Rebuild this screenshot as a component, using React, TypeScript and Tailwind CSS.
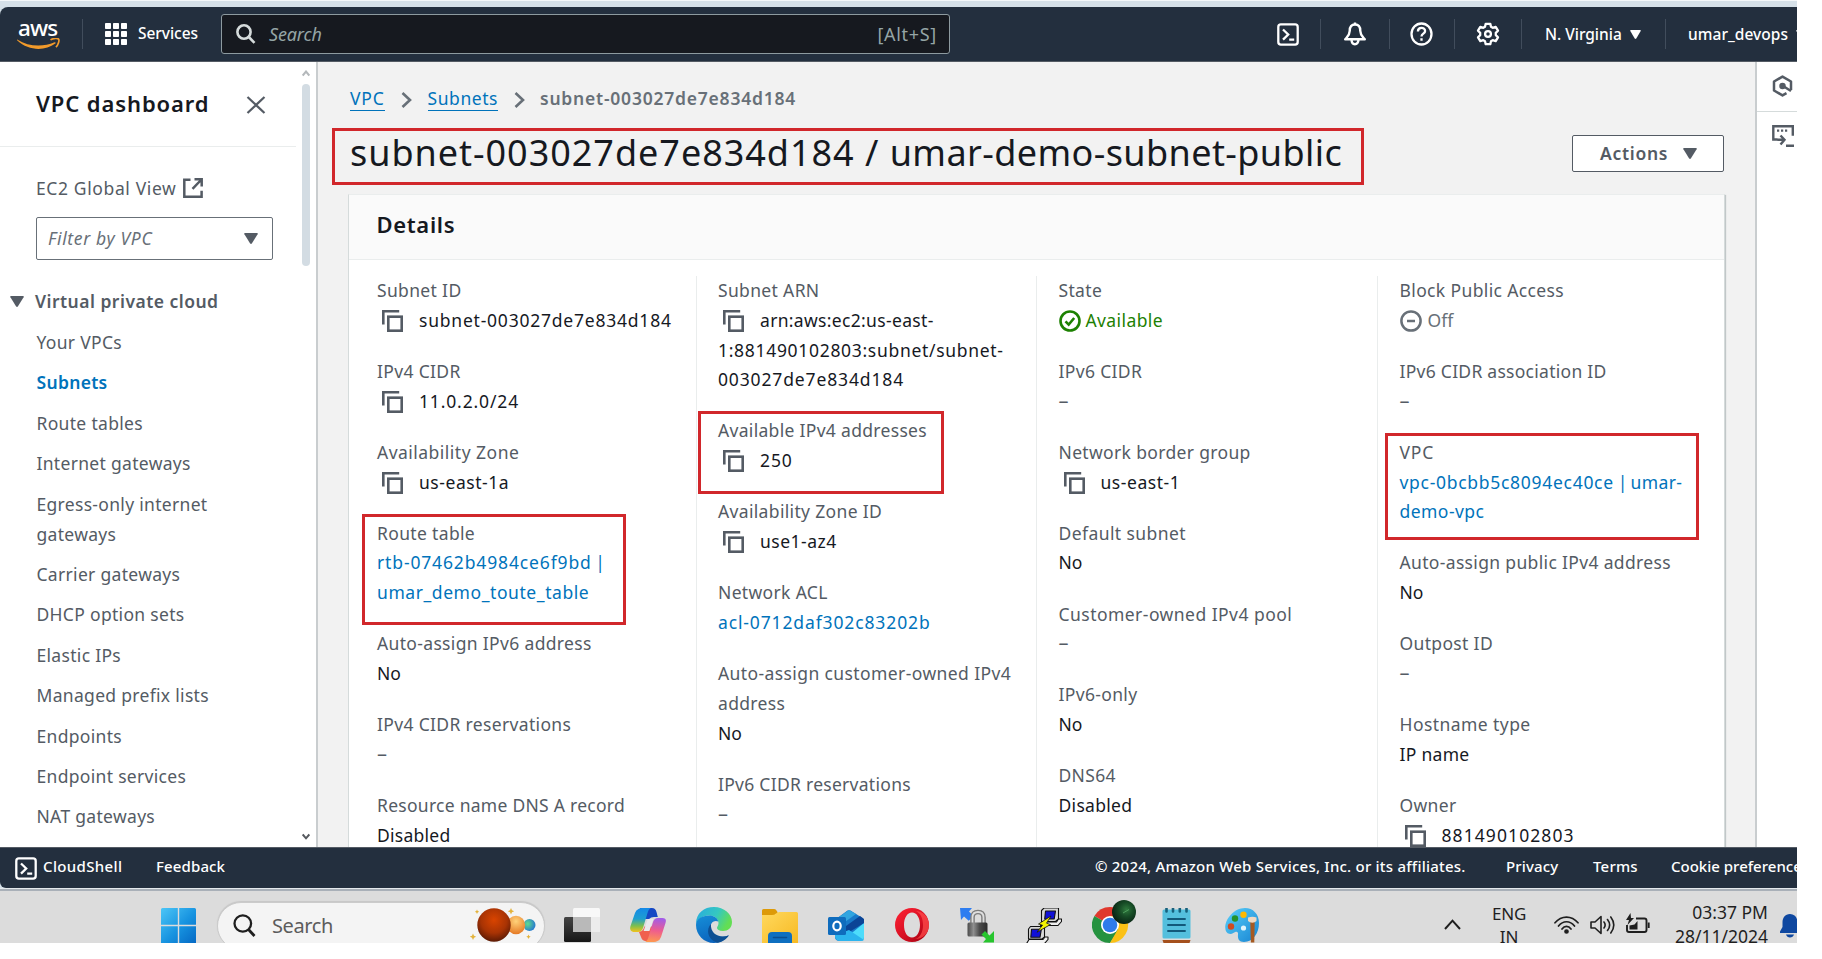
import type { ReactNode } from "react";

function Caret({ className }: { className: string }) {
  return (
    <svg className={className} viewBox="0 0 14 11" preserveAspectRatio="none" fill="currentColor">
      <path d="M1 0h12q1.200 0 .6 1.200L8 10.300Q7 11.500 6 10.300L.4 1.200Q-.2 0 1 0Z" />
    </svg>
  );
}

function ShellIcon() {
  return (
    <svg className="h-[23px] w-[22px] shrink-0 text-white" viewBox="0 0 22 23" preserveAspectRatio="none" fill="none" stroke="currentColor" strokeWidth="2.300">
      <rect x="1.300" y="1.300" width="19.400" height="20.400" rx="2.600" />
      <path d="M6 6.500l5.200 5L6 16.600M12.200 16.600h5" />
    </svg>
  );
}

function CopyIcon() {
  return (
    <svg className="mr-[16px] ml-[5px] inline-block h-[22px] w-[21px] align-[-5px] text-[#545b64]" viewBox="0 0 21 22" fill="none" stroke="currentColor" strokeWidth="2.600">
      <path d="M1.300 14.500V1.300h15.900" />
      <rect x="6.300" y="6.700" width="13.400" height="14" />
    </svg>
  );
}

function Divider() {
  return <div className="h-[30px] w-px shrink-0 bg-[#414d5c]" />;
}

/* ---------- top navigation ---------- */

function TopNav() {
  return (
    <header className="flex h-[55px] shrink-0 items-center overflow-hidden rounded-tl-lg border-b border-[#545b64] bg-[#232f3e] text-white">
      <div className="flex w-[82px] shrink-0 flex-col pl-[17px]">
        <span className="h-[21px] pl-[1px] text-[22.500px] leading-[17px] font-medium tracking-[-0.900px]">aws</span>
        <svg className="-mt-[2px] h-[12px] w-[43px]" viewBox="0 0 43 12" fill="none">
          <path d="M.6 1.700C11 8.600 26 9.400 37.500 4.300c1-.4 1.700.7.8 1.300C28 13.300 11.500 13 .3 2.600-.2 2 .1 1.400.6 1.700Z" fill="#f19a2b" />
          <path d="M33.500 1.900c2.800-1.900 7.600-1.700 8.200-.7.7 1.100-.3 5.800-2.800 8" stroke="#f19a2b" strokeWidth="1.700" />
        </svg>
      </div>
      <Divider />
      <svg className="ml-[22px] h-[22px] w-[22px] shrink-0" viewBox="0 0 22 22" fill="#fff">
        {[0, 8, 16].map((y) => [0, 8, 16].map((x) => <rect key={`${x}-${y}`} x={x} y={y} width="6" height="6" rx=".8" />))}
      </svg>
      <span className="ml-[11px] w-[83px] shrink-0 text-[15.500px] font-medium tracking-[-0.050px]">Services</span>
      <div className="flex h-[40px] w-[729px] shrink-0 items-center rounded-[3px] border border-[#8d9a9f] bg-[#16191f]">
        <svg className="ml-[14px] h-[20px] w-[20px]" viewBox="0 0 20 20" fill="none" stroke="#d5dbdb" strokeWidth="2.600">
          <ellipse cx="8" cy="8" rx="6.600" ry="6.700" />
          <path d="M12.800 13l5.700 5.800" />
        </svg>
        <span className="ml-[13px] grow text-[18px] tracking-[-0.150px] text-[#95a5a6] italic">Search</span>
        <span className="mr-[12px] text-[18px] tracking-[0.700px] text-[#95a5a6]">[Alt+S]</span>
      </div>
      <div className="ml-[327px]">
        <ShellIcon />
      </div>
      <div className="ml-[21px] flex items-center">
        <Divider />
        <svg className="mx-[22px] h-[24px] w-[24px]" viewBox="0 0 24 24" fill="none" stroke="#fff" strokeWidth="2.400" strokeLinejoin="round">
          <path d="M12 2.500c-4 0-5.300 3-5.300 6.500 0 4-2 5.300-4.500 8.300h19.600c-2.500-3-4.500-4.300-4.500-8.300 0-3.500-1.300-6.500-5.300-6.500Z" />
          <path d="M12 .5v2.500M8.600 18c0 5.600 6.800 5.600 6.800 0" />
        </svg>
        <Divider />
        <svg className="mr-[21px] ml-[20px] h-[24px] w-[23px]" viewBox="0 0 23 24" fill="none" stroke="#fff" strokeWidth="2.300">
          <ellipse cx="11.500" cy="12" rx="10" ry="10.500" />
          <path d="M7.900 9.500c0-4.800 7.200-4.800 7.200-.5 0 2.800-3.600 2.600-3.600 5.500M11.500 16.200v2.500" />
        </svg>
        <Divider />
        <svg className="mr-[21px] ml-[21px] h-[24px] w-[24px]" viewBox="0 0 24 24" fill="none" stroke="#fff" strokeWidth="2.300" strokeLinejoin="round">
          <path d="M9.700 1.800h4.600l.7 3 1.700 1 3-.9 2.300 3.800-2.200 2.200v2.200l2.200 2.200-2.300 3.800-3-.9-1.700 1-.7 3H9.700l-.7-3-1.700-1-3 .9L2 15.300l2.200-2.200v-2.200L2 8.700l2.300-3.800 3 .9 1.700-1Z" />
          <circle cx="12" cy="12" r="2.900" />
        </svg>
        <Divider />
      </div>
      <span className="mt-[2px] ml-[23px] w-[85px] shrink-0 text-[15.500px] font-medium tracking-[-0.020px]">N. Virginia</span>
      <Caret className="h-[9px] w-[11px] shrink-0" />
      <div className="ml-[24px]">
        <Divider />
      </div>
      <span className="mt-[2px] ml-[22px] w-[108px] shrink-0 text-[15.500px] font-medium tracking-[0.050px]">umar_devops</span>
      <Caret className="h-[9px] w-[11px] shrink-0" />
    </header>
  );
}

/* ---------- sidebar ---------- */

const navItems: ReactNode[] = [
  "Your VPCs",
  "Subnets",
  "Route tables",
  "Internet gateways",
  <>Egress-only internet<br />gateways</>,
  "Carrier gateways",
  "DHCP option sets",
  "Elastic IPs",
  "Managed prefix lists",
  "Endpoints",
  "Endpoint services",
  "NAT gateways",
];

function Sidebar() {
  return (
    <aside className="flex w-[318px] shrink-0 border-r-2 border-[#c9cdcf] bg-white text-[#545b64]">
      <div className="flex w-[296px] shrink-0 flex-col">
        <div className="flex h-[85px] shrink-0 items-center border-b border-[#eaeded] pb-[3px] pl-[36px]">
          <h2 className="w-[210px] text-[22px] leading-8 font-semibold tracking-[0.900px] text-[#16191f]">VPC dashboard</h2>
          <svg className="mt-[4px] h-[18px] w-[20px]" viewBox="0 0 20 18" preserveAspectRatio="none" stroke="#545b64" strokeWidth="2.200">
            <path d="M1.500 1l17 16M18.500 1l-17 16" />
          </svg>
        </div>
        <div className="mt-[26px] flex h-[30px] shrink-0 items-center pl-[36px]">
          <span className="w-[147px] tracking-[0.620px]">EC2 Global View</span>
          <svg className="h-[20px] w-[20px]" viewBox="0 0 20 20" fill="none" stroke="#545b64" strokeWidth="2.500">
            <path d="M7.500 1.800H1.300v16.900h17.300v-6M11.500 1.300h7.200v7.200M18.500 1.500l-9 9.300" />
          </svg>
        </div>
        <div className="mt-[14px] ml-[36px] flex h-[43px] w-[237px] shrink-0 items-center justify-between rounded-[2px] border border-[#687078] pr-[14px] pl-[11px]">
          <span className="tracking-[0.660px] text-[#687078] italic">Filter by VPC</span>
          <Caret className="h-[11px] w-[14px]" />
        </div>
        <div className="mt-[26px] flex h-[30px] shrink-0 items-center pl-[10px]">
          <Caret className="h-[11px] w-[14px]" />
          <span className="ml-[11px] font-semibold tracking-[0.480px]">Virtual private cloud</span>
        </div>
        <nav className="mt-[11px] flex flex-col gap-[10.400px] pl-[36.500px] leading-[30px] tracking-[0.310px]">
          {navItems.map((item, i) => (
            <a key={i} className={i === 1 ? "font-semibold text-[#0073bb]" : ""}>
              {item}
            </a>
          ))}
        </nav>
      </div>
      <div className="flex w-[20px] flex-col items-center pt-[8px] pr-[1px] pb-[7px]">
        <svg className="h-[7px] w-[8px]" viewBox="0 0 8 7" fill="none" stroke="#b4b8bb" strokeWidth="2">
          <path d="M.7 5.500L4 1.500l3.300 4" />
        </svg>
        <div className="mt-[7px] h-[182px] w-[8px] rounded-[4px] bg-[#d3dce3]" />
        <svg className="mt-auto h-[7px] w-[8px]" viewBox="0 0 8 7" fill="none" stroke="#55595e" strokeWidth="2">
          <path d="M.7 1.500L4 5.300l3.300-3.800" />
        </svg>
      </div>
    </aside>
  );
}

/* ---------- details ---------- */

function Field({ label, children, mark }: { label: ReactNode; children: ReactNode; mark?: string }) {
  return (
    <div className="relative">
      <dt className="tracking-[0.340px] text-[#545b64]">{label}</dt>
      <dd className="text-[#16191f]">{children}</dd>
      {mark && <div className={`absolute border-[3px] border-[#d1272b] ${mark}`} />}
    </div>
  );
}

function Copyable({ children }: { children: ReactNode }) {
  return (
    <>
      <CopyIcon />
      {children}
    </>
  );
}

const Dash = () => <span className="text-[20px] leading-[20px] text-[#545b64]">–</span>;

function Details() {
  return (
    <section className="ml-[30px] flex w-[1377px] grow flex-col border border-b-0 border-[#d5dbdb] border-t-[#eaeded] bg-white shadow-[1px_1px_1px_0_rgba(0,28,36,0.2)]">
      <div className="flex h-[65px] shrink-0 items-center border-b border-[#eaeded] bg-[#fafafa] pb-[6px] pl-[27.500px]">
        <h2 className="text-[22px] font-semibold tracking-[0.650px] text-[#16191f]">Details</h2>
      </div>
      <dl className="mt-[16px] grid grow grid-cols-[347px_340px_341px_347px] leading-[29.800px] whitespace-nowrap [&>div]:flex [&>div]:flex-col [&>div]:gap-[21.300px]">
        <div className="pl-[28px]">
          <Field label="Subnet ID">
            <Copyable><span className="tracking-[0.780px]">subnet-003027de7e834d184</span></Copyable>
          </Field>
          <Field label="IPv4 CIDR">
            <Copyable><span className="tracking-[0.850px]">11.0.2.0/24</span></Copyable>
          </Field>
          <Field label={<span className="tracking-[0.480px]">Availability Zone</span>}>
            <Copyable><span className="tracking-[0.550px]">us-east-1a</span></Copyable>
          </Field>
          <Field label="Route table" mark="-top-[5px] -left-[15px] h-[111px] w-[264px]">
            <a className="text-[#0073bb]">
              <span className="tracking-[0.860px]">rtb-07462b4984ce6f9bd</span>
              <span className="tracking-[-1px]"> |</span>
              <br />
              <span className="tracking-[0.570px]">umar_demo_toute_table</span>
            </a>
          </Field>
          <Field label="Auto-assign IPv6 address">No</Field>
          <Field label="IPv4 CIDR reservations"><Dash /></Field>
          <Field label={<span className="tracking-[0.270px]">Resource name DNS A record</span>}><span className="tracking-[0.250px]">Disabled</span></Field>
        </div>
        <div className="border-l border-[#eaeded] pl-[21px]">
          <Field label="Subnet ARN">
            <Copyable><span className="tracking-[0.330px]">arn:aws:ec2:us-east-</span></Copyable>
            <br />
            <span className="tracking-[0.690px]">1:881490102803:subnet/subnet-</span>
            <br />
            <span className="tracking-[0.860px]">003027de7e834d184</span>
          </Field>
          <Field label={<span className="tracking-[0.310px]">Available IPv4 addresses</span>} mark="-top-[5px] -left-[20px] h-[83px] w-[246px]">
            <Copyable><span className="tracking-[0.900px]">250</span></Copyable>
          </Field>
          <Field label="Availability Zone ID">
            <Copyable><span className="tracking-[0.500px]">use1-az4</span></Copyable>
          </Field>
          <Field label="Network ACL">
            <a className="tracking-[0.870px] text-[#0073bb]">acl-0712daf302c83202b</a>
          </Field>
          <Field label={<><span className="tracking-[0.400px]">Auto-assign customer-owned IPv4</span><br />address</>}>No</Field>
          <Field label={<span className="tracking-[0.280px]">IPv6 CIDR reservations</span>}><Dash /></Field>
        </div>
        <div className="border-l border-[#eaeded] pl-[21.500px]">
          <Field label="State">
            <span className="tracking-[0.400px] text-[#1d8102]">
              <svg className="mr-[5px] inline-block h-[22px] w-[22px] align-[-5px]" viewBox="0 0 22 22" fill="none" stroke="currentColor" strokeWidth="2.600">
                <circle cx="11" cy="11" r="9.500" />
                <path d="M6.500 11.300l3.200 3.300 5.500-6.600" />
              </svg>
              Available
            </span>
          </Field>
          <Field label="IPv6 CIDR"><Dash /></Field>
          <Field label="Network border group">
            <Copyable><span className="tracking-[0.550px]">us-east-1</span></Copyable>
          </Field>
          <Field label={<span className="tracking-[0.420px]">Default subnet</span>}>No</Field>
          <Field label={<span className="tracking-[0.460px]">Customer-owned IPv4 pool</span>}><Dash /></Field>
          <Field label="IPv6-only">No</Field>
          <Field label="DNS64"><span className="tracking-[0.300px]">Disabled</span></Field>
        </div>
        <div className="border-l border-[#eaeded] pl-[21.500px]">
          <Field label={<span className="tracking-[0.370px]">Block Public Access</span>}>
            <span className="text-[#687078]">
              <svg className="mr-[6px] inline-block h-[22px] w-[22px] align-[-5px]" viewBox="0 0 22 22" fill="none" stroke="currentColor" strokeWidth="2.500">
                <circle cx="11" cy="11" r="9.600" />
                <path d="M7 11h8" />
              </svg>
              Off
            </span>
          </Field>
          <Field label={<span className="tracking-[0.270px]">IPv6 CIDR association ID</span>}><Dash /></Field>
          <Field label={<span className="tracking-[0.800px]">VPC</span>} mark="-top-[5px] -left-[15px] h-[107px] w-[314px]">
            <a className="text-[#0073bb]">
              <span className="tracking-[0.710px]">vpc-0bcbb5c8094ec40ce</span>
              <span className="tracking-[-0.700px]"> | </span>
              <span className="tracking-[0.400px]">umar-</span>
              <br />
              <span className="tracking-[0.450px]">demo-vpc</span>
            </a>
          </Field>
          <Field label="Auto-assign public IPv4 address">No</Field>
          <Field label="Outpost ID"><Dash /></Field>
          <Field label={<span className="tracking-[0.430px]">Hostname type</span>}><span className="tracking-[0.300px]">IP name</span></Field>
          <Field label="Owner">
            <Copyable><span className="tracking-[1.080px]">881490102803</span></Copyable>
          </Field>
        </div>
      </dl>
    </section>
  );
}

function Chevron() {
  return (
    <svg className="h-[16px] w-[11px]" viewBox="0 0 11 16" fill="none" stroke="#687078" strokeWidth="2.600">
      <path d="M1.500 1l7.500 7-7.500 7" />
    </svg>
  );
}

function Main() {
  return (
    <main className="flex w-[1437px] shrink-0 flex-col overflow-hidden bg-[#f2f2f2]">
      <div className="flex h-[66px] shrink-0 pt-[24px] pl-[32px] leading-[24px]">
        <a className="mr-[16px] h-[25px] border-b border-[#0073bb] tracking-[0.800px] text-[#0073bb]">VPC</a>
        <span className="flex h-[27px] items-center"><Chevron /></span>
        <a className="mr-[16px] ml-[16px] h-[25px] border-b border-[#0073bb] tracking-[0.550px] text-[#0073bb]">Subnets</a>
        <span className="flex h-[27px] items-center"><Chevron /></span>
        <span className="ml-[15px] font-semibold tracking-[0.780px] text-[#687078]">subnet-003027de7e834d184</span>
      </div>
      <div className="flex h-[66px] shrink-0">
        <div className="ml-[14px] flex h-[57px] w-[1032px] border-[3px] border-[#d1272b] pl-[15px]">
          <h1 className="text-[36px] leading-[44px] whitespace-nowrap text-[#16191f]">
            <span className="tracking-[0.970px]">subnet-003027de7e834d184 / </span>
            <span className="tracking-[0.400px]">umar-demo-subnet-public</span>
          </h1>
        </div>
        <button className="mt-[7px] ml-[208px] flex h-[37px] w-[152px] items-center rounded-[2px] border border-[#545b64] bg-white pl-[27px] font-semibold tracking-[0.700px] text-[#545b64]">
          <span className="w-[83px] text-left">Actions</span>
          <Caret className="h-[11px] w-[14px]" />
        </button>
      </div>
      <Details />
    </main>
  );
}

function ToolRail() {
  return (
    <aside className="flex grow flex-col border-l-2 border-[#c9cdcf] bg-white text-[#545b64]">
      <div className="flex h-[50px] items-center border-b border-[#d5dbdb] pb-[2px] pl-[15px]">
        <svg className="h-[22px] w-[21px] shrink-0" viewBox="0 0 21 22" fill="none" stroke="currentColor" strokeWidth="2.500">
          <path d="M19 15V6.500L10.500 1.600 2 6.500v9l8.500 4.900 4-2.300" strokeLinejoin="round" />
          <circle cx="10.500" cy="11" r="2" fill="currentColor" />
          <path d="M11 11l8 5" />
        </svg>
      </div>
      <svg className="mt-[13px] ml-[15px] h-[22px] w-[23px] shrink-0" viewBox="0 0 23 22" fill="none" stroke="currentColor" strokeWidth="2.400">
        <path d="M5.500 14.500H1.300V1.300h19.500v9.500M5.500 14.800h6M8.500 10.500l4 4.300-4 4.700M14 20.800h8" />
        <path d="M5 5.600h12" strokeDasharray="2.200 1.800" />
      </svg>
    </aside>
  );
}

function Footer() {
  return (
    <footer className="flex h-[41px] shrink-0 items-center overflow-hidden rounded-bl-md border-t border-[#545b64] bg-[#232f3e] pl-[15px] text-[15px] font-medium whitespace-nowrap text-white [&>span]:-mt-[3px]">
      <ShellIcon />
      <span className="ml-[6px] w-[113px] shrink-0 tracking-[0.350px]">CloudShell</span>
      <span className="w-[939px] shrink-0 tracking-[0.130px]">Feedback</span>
      <span className="w-[411px] shrink-0 tracking-[0.220px]">© 2024, Amazon Web Services, Inc. or its affiliates.</span>
      <span className="w-[87px] shrink-0 tracking-[0.150px]">Privacy</span>
      <span className="w-[78px] shrink-0 tracking-[0.200px]">Terms</span>
      <span className="shrink-0">Cookie preferences</span>
    </footer>
  );
}

/* ---------- desktop taskbar ---------- */

function Planets() {
  return (
    <svg className="h-[38px] w-[68px]" viewBox="0 0 68 38">
      <defs>
        <radialGradient id="mars" cx=".5" cy=".35" r=".65"><stop offset="0" stopColor="#d94400" /><stop offset=".6" stopColor="#a83304" /><stop offset="1" stopColor="#5c1a04" /></radialGradient>
        <radialGradient id="venus" cx=".5" cy=".3" r=".7"><stop offset="0" stopColor="#ffd27a" /><stop offset="1" stopColor="#e57a25" /></radialGradient>
        <radialGradient id="earth" cx=".35" cy=".4" r=".7"><stop offset="0" stopColor="#5fdc8c" /><stop offset="1" stopColor="#2374d4" /></radialGradient>
      </defs>
      <circle cx="59.500" cy="19" r="6" fill="url(#earth)" />
      <circle cx="46" cy="19" r="9.200" fill="url(#venus)" />
      <circle cx="24" cy="19" r="16.700" fill="url(#mars)" />
      <path d="M41 2l1 2.200 2.200 1L42 6.200 41 8.400l-1-2.200-2.200-1L40 4.200ZM7 3.500l.7 1.500 1.500.7-1.500.7L7 8l-.7-1.600-1.500-.7L6.300 5ZM3 27.500l1 2.200 2.200 1L4 31.700 3 34l-1-2.300-2.200-1 2.200-1ZM58.500 28.500l.7 1.500 1.500.7-1.500.7-.7 1.500-.7-1.500-1.500-.7 1.500-.7Z" fill="#e3b33c" />
    </svg>
  );
}

function Taskbar() {
  return (
    <div className="flex h-[52px] shrink-0 items-start overflow-hidden bg-[#dcdcdc] pl-[161px] text-[#1f1f1f]">
      <svg className="mt-[17px] h-[35px] w-[35px] shrink-0" viewBox="0 0 35 35">
        <defs><linearGradient id="win" x1="0" y1="0" x2="1" y2="1"><stop offset="0" stopColor="#4cc6f7" /><stop offset=".55" stopColor="#1793e0" /><stop offset="1" stopColor="#0569c4" /></linearGradient></defs>
        <path d="M1.500 0H16.800v16.800H0V1.500Q0 0 1.500 0ZM18.200 0H33.500Q35 0 35 1.500v15.300H18.200ZM0 18.200h16.800V35H0ZM18.200 18.200H35V35H18.200Z" fill="url(#win)" />
      </svg>

      <div className="mt-[11px] ml-[21px] flex h-[48px] w-[328px] shrink-0 items-start rounded-full border border-[#cbcbcb] bg-[#f4f4f4] shadow-[0_-1px_1px_#c6c6c6]">
        <svg className="mt-[11px] ml-[15px] h-[23px] w-[23px]" viewBox="0 0 23 23" fill="none" stroke="#1f1f1f" strokeWidth="2.300">
          <ellipse cx="9.800" cy="9.500" rx="8.300" ry="8.200" />
          <path d="M15.500 15.500l6 6.500" strokeWidth="2.800" />
        </svg>
        <span className="mt-[7px] ml-[16px] w-[198px] text-[20px] leading-[32px] tracking-[-0.400px] text-[#5c5c5c]">Search</span>
        <div className="mt-[3px]"><Planets /></div>
      </div>

      <svg className="mt-[17px] ml-[19px] h-[35px] w-[36px] shrink-0" viewBox="0 0 36 35">
        <defs><linearGradient id="tv" x1="0" y1="0" x2="0" y2="1"><stop offset="0" stopColor="#444" /><stop offset="1" stopColor="#171717" /></linearGradient></defs>
        <rect x="0" y="9" width="27" height="25" rx="1.500" fill="url(#tv)" />
        <rect x="9" y="0" width="27" height="24" rx="1.500" fill="#f8f8f8" />
        <path d="M9 9h18v15H9Z" fill="#b9b9b9" />
        <path d="M27 9h9v15h-9Z" fill="#ececec" />
      </svg>

      <svg className="mt-[17px] ml-[30px] h-[34px] w-[36px] shrink-0" viewBox="0 0 36 34">
        <defs>
          <linearGradient id="cp1" x1="0" y1="0" x2="0" y2="1"><stop offset="0" stopColor="#1489e8" /><stop offset=".45" stopColor="#1e9fd0" /><stop offset=".75" stopColor="#7fbf4c" /><stop offset="1" stopColor="#f2c21c" /></linearGradient>
          <linearGradient id="cp2" x1=".3" y1="0" x2=".2" y2="1"><stop offset="0" stopColor="#a45ce6" /><stop offset=".5" stopColor="#ee5d8e" /><stop offset="1" stopColor="#ff9a4d" /></linearGradient>
        </defs>
        <path d="M10 0h12q3.500 0 4.500 4l1.300 5H24q-3 0-5 2h-6Z" fill="#1648c4" />
        <path d="M8.500 1Q10 0 12 0h9q-2.500 1-3.500 5L13 20q-1.300 4-5 4H3.500Q-1 23 .5 18L5 5Q6 2 8.500 1Z" fill="url(#cp1)" />
        <path d="M9 24q3.500-.5 4.500-3l1-2.500h8L18 33h-3q-3-.5-4-4Z" fill="#f0604e" />
        <path d="M27.500 33Q26 34 24 34h-9q2.500-1 3.500-5L23 14q1.300-4 5-4h4.500q4.500 0 3 5L31 29q-1 3-3.500 4Z" fill="url(#cp2)" />
        <path d="M17.800 11h5.600l-4 12h-5.800Z" fill="#e9e9ee" />
      </svg>

      <svg className="mt-[16px] ml-[30px] h-[36px] w-[36px] shrink-0" viewBox="0 0 36 36">
        <defs>
          <linearGradient id="ed1" x1="0" y1="0" x2="1" y2=".4"><stop offset="0" stopColor="#27a9e1" /><stop offset=".6" stopColor="#35c8c0" /><stop offset="1" stopColor="#63de54" /></linearGradient>
          <linearGradient id="ed2" x1="0" y1="0" x2=".4" y2="1"><stop offset="0" stopColor="#168fd8" /><stop offset="1" stopColor="#0c64bd" /></linearGradient>
        </defs>
        <path d="M0 17C0 6 8 0 18 0s18 7 18 15c0 6-4 9-9 9-4 0-6-1.500-6-3 0-1.500 1.500-2 1.500-5 0-4-4-7.500-9.500-7.500C6 8.500 1 13 0 17Z" fill="url(#ed1)" />
        <path d="M0 18C0 12 6 8.500 13 8.500c5 0 8.500 2.500 9.300 6C18 12.500 14.500 16 14.500 20c0 8 8.500 12 18 8.500C29.500 33 24 36 18 36 8 36 0 28 0 18Z" fill="url(#ed2)" />
        <path d="M15 17c-5 5-4 15 6 18.700 5-.5 9.500-3.500 12-7.500C24 32 14 27 15 17Z" fill="#0d4f93" />
      </svg>

      <svg className="mt-[18px] ml-[30px] h-[34px] w-[36px] shrink-0" viewBox="0 0 36 34">
        <defs><linearGradient id="fo" x1="0" y1="0" x2="1" y2="1"><stop offset="0" stopColor="#ffd95e" /><stop offset="1" stopColor="#f7b922" /></linearGradient></defs>
        <path d="M0 1.500Q0 0 1.500 0H12q1.500 0 2.300 1.300L15.500 3V12H0Z" fill="#dd9a08" />
        <path d="M0 6h10q2.500 0 4-1.500T17.500 3H34.500Q36 3 36 4.500V34H0Z" fill="url(#fo)" />
        <path d="M6 34v-7q0-4 4-4h16q4 0 4 4v7Z" fill="#0f6fc0" />
        <path d="M11.500 28.500h13" stroke="#0a4d8f" strokeWidth="1.600" strokeLinecap="round" />
      </svg>

      <svg className="mt-[19px] ml-[30px] h-[32px] w-[36px] shrink-0" viewBox="0 0 36 32">
        <path d="M8 9L19.500 .6Q21 -.2 22.500 .6L34.500 8Q36 9 36 11V27Q36 31 32 31H12Q7 31 7 27Z" fill="#1879c9" />
        <path d="M8 9L21 0l7 4-18 13Z" fill="#30a5e0" />
        <path d="M14 31L36 13v14q0 4-4 4Z" fill="#4ddcfb" />
        <path d="M18 16L32 6l4 3v4L18 24Z" fill="#0b4496" />
        <path d="M7 25l14-5 15 10q-1 1-4 1H12q-4 0-5-4Z" fill="#2cb4ee" />
        <rect x="0" y="7" width="18" height="18" rx="1.500" fill="#0f6cbd" />
        <ellipse cx="9" cy="16" rx="3.700" ry="4.300" fill="none" stroke="#fff" strokeWidth="2.200" />
      </svg>

      <svg className="mt-[17px] ml-[31px] h-[34px] w-[34px] shrink-0" viewBox="0 0 34 34">
        <defs><linearGradient id="op" x1="0" y1="0" x2=".9" y2="1"><stop offset="0" stopColor="#ff2335" /><stop offset=".6" stopColor="#d50f22" /><stop offset="1" stopColor="#a3000f" /></linearGradient></defs>
        <path fillRule="evenodd" d="M17 0a17 17 0 1 0 0 34 17 17 0 1 0 0-34Zm0 4.500c4.800 0 8 5.500 8 12.500s-3.200 12.500-8 12.500S9 24 9 17 12.200 4.500 17 4.500Z" fill="url(#op)" />
        <path d="M20 3c5 1 8 7 8 14s-3 13-8 14c8 0 14-6 14-14S28 3 20 3Z" fill="#ff4b4b" opacity=".75" />
      </svg>

      <svg className="mt-[17px] ml-[31px] h-[35px] w-[35px] shrink-0" viewBox="0 0 35 35">
        <defs><linearGradient id="lk" x1="0" y1="0" x2="1" y2="0"><stop offset="0" stopColor="#4a4a4a" /><stop offset=".3" stopColor="#8f8f8f" /><stop offset=".6" stopColor="#4c4c4c" /><stop offset="1" stopColor="#2c2c2c" /></linearGradient></defs>
        <path d="M0 0h12L9 3.500l4.500 4.700-4.800 4.500L4 8.500 1 12Z" fill="#2e7df0" />
        <path d="M12.500 16V9.500q0-5.500 5.500-5.500t5.500 5.500V16" fill="none" stroke="#7d7d7d" strokeWidth="4.600" />
        <path d="M12.500 16V9.500q0-5.500 5.500-5.500t5.500 5.500V16" fill="none" stroke="#dedede" strokeWidth="1.800" />
        <rect x="7.500" y="14.500" width="20" height="14" rx="1.500" fill="url(#lk)" />
        <path d="M34 34.500H23l3-3.500-4.500-4.500 3.500-3.500 4.500 4.500L34 23Z" fill="#27c52e" />
      </svg>

      <svg className="mt-[17px] ml-[31px] h-[36px] w-[36px] shrink-0" viewBox="0 0 36 36" stroke="#111" strokeWidth="1.100" strokeLinejoin="round">
        <path d="M18 0h14.500v11l-3 2.500H15.500V2.500Z" fill="#d8d8d8" />
        <path d="M19.500 3h10l-1.300 8h-9.500Z" fill="#1010d8" />
        <path d="M17 14h13.500l2-3H35.500v2.500L32 17.500H14.500Z" fill="#efefef" />
        <path d="M4.500 18.500H18.500V29l-2.500 2H2.500V21Z" fill="#d8d8d8" />
        <path d="M5.500 21.300h9.800L14 29.300H4.800Z" fill="#1010d8" />
        <path d="M3 31.500H17l2-2.500h3v2.500L18.500 35.500H.6Z" fill="#efefef" />
        <path d="M25 8l-12.500 8 4 1.200-5.500 7L24.500 16.500l-4-1.300Z" fill="#f5f500" strokeWidth=".8" />
      </svg>

      <svg className="mt-[9px] ml-[30px] h-[43px] w-[44px] shrink-0" viewBox="0 0 44 43">
        <defs><radialGradient id="av" cx=".6" cy=".4" r=".6"><stop offset="0" stopColor="#2f7a3d" /><stop offset=".5" stopColor="#164a25" /><stop offset="1" stopColor="#0a2414" /></radialGradient></defs>
        <path d="M18 25L2.400 16A18 18 0 0 1 33.600 16Z" fill="#e0382d" />
        <path d="M18 25L2.400 16A18 18 0 0 0 18 43l9-13.500Z" fill="#25923f" />
        <path d="M18 16h15.600A18 18 0 0 1 18 43l8-14Z" fill="#fbc116" />
        <circle cx="18" cy="25" r="9" fill="#fff" />
        <circle cx="18" cy="25" r="7.300" fill="#2f7bea" />
        <circle cx="32" cy="12" r="12" fill="url(#av)" />
        <path d="M31 13l6-3.500" stroke="#4f9f5e" strokeWidth="1" />
      </svg>

      <svg className="mt-[17px] ml-[26px] h-[35px] w-[29px] shrink-0" viewBox="0 0 29 35">
        <rect x=".5" y="1.500" width="28" height="29" rx="1.500" fill="#54bfdd" />
        <path d="M4.500 0v3.500M11 0v3.500M17.800 0v3.500M24.500 0v3.500" stroke="#17607c" strokeWidth="2.600" strokeLinecap="round" />
        <path d="M6 11h17M6 17h17M6 23h17" stroke="#12597a" strokeWidth="1.900" strokeLinecap="round" />
        <path d="M.5 32h28l-1 3h-26Z" fill="#a5501d" />
      </svg>

      <svg className="mt-[17px] ml-[34px] h-[35px] w-[35px] shrink-0" viewBox="0 0 35 35">
        <defs><linearGradient id="pa" x1="0" y1="0" x2="1" y2="1"><stop offset="0" stopColor="#5ad0fa" /><stop offset="1" stopColor="#1784d2" /></linearGradient></defs>
        <path d="M20 0C9 0 0 11 .3 20c.3 6 5 7 8 5s5-2 4.700 1.500C12.500 31 14 34 19 34c9 0 15-9 15-19C34 6 28 0 20 0Z" fill="url(#pa)" />
        <circle cx="18.500" cy="6.800" r="3.200" fill="#ffb900" />
        <circle cx="10" cy="10.500" r="3.200" fill="#23932d" />
        <circle cx="6" cy="18.500" r="3.200" fill="#d04a21" />
        <circle cx="18.500" cy="20" r="2.600" fill="#dff3fb" />
        <path d="M25.300 14h4.400l-.4 20.500h-3.400Z" fill="#a65a22" />
        <path d="M23 9.500q4.500-1.500 8.500 0v3.500q-1.500 1.700-4.200 1.700T23 13Z" fill="#efd9c3" />
      </svg>

      <svg className="mt-[28px] ml-[184px] h-[11px] w-[17px] shrink-0" viewBox="0 0 17 11" fill="none" stroke="#1f1f1f" strokeWidth="2">
        <path d="M1 10l7.500-8.300L16 10" />
      </svg>
      <div className="mt-[11px] ml-[23px] flex w-[50px] shrink-0 flex-col items-center text-[17px] leading-[23px] tracking-[-0.200px]">
        <span>ENG</span>
        <span>IN</span>
      </div>
      <svg className="mt-[25px] ml-[20px] h-[18px] w-[25px] shrink-0" viewBox="0 0 25 18" fill="none" stroke="#1f1f1f" strokeWidth="1.700" strokeLinecap="round">
        <path d="M1 6.800C7.500-.9 17.500-.9 24 6.800M4.500 10C9 4.300 16 4.300 20.500 10M8 13C10.500 9.500 14.500 9.500 17 13" />
        <circle cx="12.500" cy="15.500" r="1.500" fill="#1f1f1f" />
      </svg>
      <svg className="mt-[24px] ml-[11px] h-[20px] w-[25px] shrink-0" viewBox="0 0 25 20" fill="none" stroke="#1f1f1f" strokeWidth="1.600" strokeLinejoin="round" strokeLinecap="round">
        <path d="M1 7h4l6-5.500v17L5 13H1ZM14 7q2.300 3 0 6M17.500 4.500q4.300 5.500 0 11M20.800 2q6 8 0 16" />
      </svg>
      <svg className="mt-[22px] ml-[10px] h-[21px] w-[25px] shrink-0" viewBox="0 0 25 21" fill="none" stroke="#1f1f1f" strokeWidth="1.900">
        <path d="M11 5.500h8.500q2 0 2 2v9.500q0 2-2 2H4q-2 0-2-2v-5" />
        <path d="M23.700 9.500v5.500" />
        <path d="M12.500 8v8.500H4.500v-4l5-1Z" fill="#1f1f1f" stroke="none" />
        <path d="M5.500 0L1 7h3L2.500 12 9 5H6Z" fill="#1f1f1f" stroke="none" />
      </svg>
      <div className="mt-[9px] ml-[18px] flex w-[100px] shrink-0 flex-col items-end text-[17.500px] leading-[24px]">
        <span>03:37 PM</span>
        <span>28/11/2024</span>
      </div>
      <svg className="mt-[23px] ml-[12px] h-[24px] w-[20px] shrink-0" viewBox="0 0 20 24" fill="#0f48a0">
        <path d="M10 0C5 0 2.500 4 2.500 8.500V13L0 17.500V19h20v-1.500L17.500 13V8.500C17.500 4 15 0 10 0ZM6 20.500h8q-1 3-4 3t-4-3Z" />
      </svg>
    </div>
  );
}

export default function App() {
  return (
    <div className="h-[959px] w-[1822px] overflow-hidden bg-white font-['Noto_Sans',sans-serif] text-[17.500px]">
      <div className="flex h-[943px] w-[1797px] flex-col overflow-hidden whitespace-nowrap">
        <div className="h-px shrink-0 bg-[#f4f7f9]" />
        <div className="flex grow flex-col overflow-hidden bg-[#d5e0e8] pt-[6px]">
          <TopNav />
          <div className="flex h-[785px] shrink-0 overflow-hidden">
            <Sidebar />
            <Main />
            <ToolRail />
          </div>
          <Footer />
          <div className="h-[3px] shrink-0 border-b-2 border-[#a9b0b8] bg-[#e3e8ec]" />
          <Taskbar />
        </div>
      </div>
    </div>
  );
}
